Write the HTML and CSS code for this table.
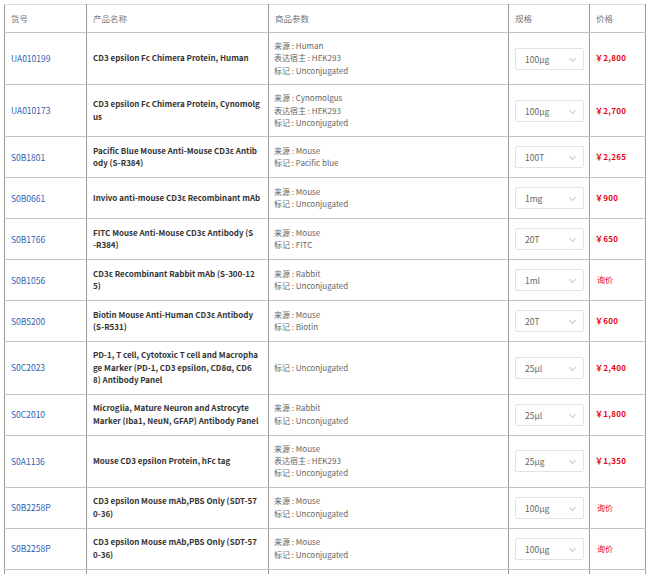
FILE: index.html
```html
<!DOCTYPE html>
<html lang="zh-CN">
<head>
<meta charset="utf-8">
<title>产品列表</title>
<link rel="stylesheet" href="styles.css">
</head>
<body>
<div class="page">
<table class="products">
  <colgroup>
    <col class="c-code"><col class="c-name"><col class="c-param"><col class="c-spec"><col class="c-price">
  </colgroup>
  <thead>
    <tr><th>货号</th><th>产品名称</th><th>商品参数</th><th>规格</th><th>价格</th></tr>
  </thead>
  <tbody>
    <tr>
      <td><a class="code" href="#">UA010199</a></td>
      <td class="name">CD3 epsilon Fc Chimera Protein, Human</td>
      <td class="param">来源 : Human<br>表达宿主 : HEK293<br>标记 : Unconjugated</td>
      <td class="spec"><div class="select">100μg<span class="chev"></span></div></td>
      <td class="price">￥2,800</td>
    </tr>
    <tr>
      <td><a class="code" href="#">UA010173</a></td>
      <td class="name">CD3 epsilon Fc Chimera Protein, Cynomolg<br>us</td>
      <td class="param">来源 : Cynomolgus<br>表达宿主 : HEK293<br>标记 : Unconjugated</td>
      <td class="spec"><div class="select">100μg<span class="chev"></span></div></td>
      <td class="price">￥2,700</td>
    </tr>
    <tr>
      <td><a class="code" href="#">S0B1801</a></td>
      <td class="name">Pacific Blue Mouse Anti-Mouse CD3ε Antib<br>ody (S-R384)</td>
      <td class="param">来源 : Mouse<br>标记 : Pacific blue</td>
      <td class="spec"><div class="select">100T<span class="chev"></span></div></td>
      <td class="price">￥2,265</td>
    </tr>
    <tr>
      <td><a class="code" href="#">S0B0661</a></td>
      <td class="name">Invivo anti-mouse CD3ε Recombinant mAb</td>
      <td class="param">来源 : Mouse<br>标记 : Unconjugated</td>
      <td class="spec"><div class="select">1mg<span class="chev"></span></div></td>
      <td class="price">￥900</td>
    </tr>
    <tr>
      <td><a class="code" href="#">S0B1766</a></td>
      <td class="name">FITC Mouse Anti-Mouse CD3ε Antibody (S<br>-R384)</td>
      <td class="param">来源 : Mouse<br>标记 : FITC</td>
      <td class="spec"><div class="select">20T<span class="chev"></span></div></td>
      <td class="price">￥650</td>
    </tr>
    <tr>
      <td><a class="code" href="#">S0B1056</a></td>
      <td class="name">CD3ε Recombinant Rabbit mAb (S-300-12<br>5)</td>
      <td class="param">来源 : Rabbit<br>标记 : Unconjugated</td>
      <td class="spec"><div class="select">1ml<span class="chev"></span></div></td>
      <td class="price ask">询价</td>
    </tr>
    <tr>
      <td><a class="code" href="#">S0B5200</a></td>
      <td class="name">Biotin Mouse Anti-Human CD3ε Antibody<br>(S-R531)</td>
      <td class="param">来源 : Mouse<br>标记 : Biotin</td>
      <td class="spec"><div class="select">20T<span class="chev"></span></div></td>
      <td class="price">￥600</td>
    </tr>
    <tr>
      <td><a class="code" href="#">S0C2023</a></td>
      <td class="name">PD-1, T cell, Cytotoxic T cell and Macropha<br>ge Marker (PD-1, CD3 epsilon, CD8α, CD6<br>8) Antibody Panel</td>
      <td class="param">标记 : Unconjugated</td>
      <td class="spec"><div class="select">25μl<span class="chev"></span></div></td>
      <td class="price">￥2,400</td>
    </tr>
    <tr>
      <td><a class="code" href="#">S0C2010</a></td>
      <td class="name">Microglia, Mature Neuron and Astrocyte<br>Marker (Iba1, NeuN, GFAP) Antibody Panel</td>
      <td class="param">来源 : Rabbit<br>标记 : Unconjugated</td>
      <td class="spec"><div class="select">25μl<span class="chev"></span></div></td>
      <td class="price">￥1,800</td>
    </tr>
    <tr>
      <td><a class="code" href="#">S0A1136</a></td>
      <td class="name">Mouse CD3 epsilon Protein, hFc tag</td>
      <td class="param">来源 : Mouse<br>表达宿主 : HEK293<br>标记 : Unconjugated</td>
      <td class="spec"><div class="select">25μg<span class="chev"></span></div></td>
      <td class="price">￥1,350</td>
    </tr>
    <tr>
      <td><a class="code" href="#">S0B2258P</a></td>
      <td class="name">CD3 epsilon Mouse mAb,PBS Only (SDT-57<br>0-36)</td>
      <td class="param">来源 : Mouse<br>标记 : Unconjugated</td>
      <td class="spec"><div class="select">100μg<span class="chev"></span></div></td>
      <td class="price ask">询价</td>
    </tr>
    <tr>
      <td><a class="code" href="#">S0B2258P</a></td>
      <td class="name">CD3 epsilon Mouse mAb,PBS Only (SDT-57<br>0-36)</td>
      <td class="param">来源 : Mouse<br>标记 : Unconjugated</td>
      <td class="spec"><div class="select">100μg<span class="chev"></span></div></td>
      <td class="price ask">询价</td>
    </tr>
    <tr class="next-row">
      <td></td><td></td><td></td><td></td><td></td>
    </tr>
  </tbody>
</table>
</div>
</body>
</html>
```
FILE: styles.css
```css
html, body {
  margin: 0;
  padding: 0;
  background: #fff;
}
body {
  font-family: "Noto Sans CJK SC", "Noto Sans", sans-serif;
  font-size: 8px;
  color: #555;
}
.page {
  padding: 4px 0 0 4px;
  height: 570px;
  overflow: hidden;
}
.products {
  border-collapse: collapse;
  table-layout: fixed;
  width: 641px;
}
.c-code { width: 82px; }
.c-name { width: 182px; }
.c-param { width: 240px; }
.c-spec { width: 81px; }
.c-price { width: 56px; }

.products th,
.products td {
  border-left: 1px solid #9a9a9a;
  border-right: 1px solid #9a9a9a;
  border-top: 1px solid #c4c4c4;
  border-bottom: 1px solid #c4c4c4;
  text-align: left;
  vertical-align: middle;
  line-height: 12.4px;
}
.products th {
  font-weight: normal;
  color: #777;
  font-size: 8.5px;
  height: 27px;
  padding: 0 6px;
  border-top-color: #dcdcdc;
}
.products td {
  padding: 7px 6px;
}
.next-row td {
  height: 26px;
}
.code {
  color: #2f5fb3;
  font-size: 8.5px;
  text-decoration: none;
}
.products td.name {
  font-weight: bold;
  color: #333;
  word-break: break-all;
}
.products td.param {
  padding-left: 5px;
  color: #666;
}
.products td.spec {
  padding: 9px 6px;
}
.select {
  position: relative;
  box-sizing: border-box;
  width: 69px;
  height: 22px;
  line-height: 20px;
  border: 1px solid #e2e2e2;
  border-radius: 2px;
  padding-left: 9px;
  color: #666;
  font-size: 8.5px;
  background: #fff;
}
.chev {
  position: absolute;
  right: 8px;
  top: 7px;
  width: 4px;
  height: 4px;
  border-right: 1px solid #c8c8c8;
  border-bottom: 1px solid #c8c8c8;
  transform: rotate(45deg);
}
.products td.price {
  padding-left: 5px;
  color: #e60012;
  font-weight: bold;
  letter-spacing: 0.3px;
}
.products td.price.ask {
  font-weight: normal;
  letter-spacing: 0;
  padding-left: 7px;
}
```
